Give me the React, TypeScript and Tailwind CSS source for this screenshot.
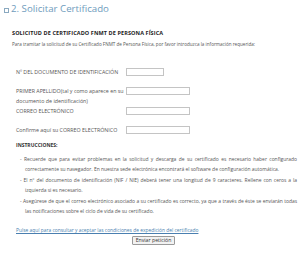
export default function App() {
  const font = { fontFamily: '"Open Sans", "Liberation Sans", sans-serif' };
  return (
    <div className="w-[300px] h-[256px] bg-white overflow-hidden text-[#555]" style={font}>
      {/* Title */}
      <div className="flex items-center gap-[2px] pl-[4px] pt-[3px] h-[15px]">
        <span className="w-[5px] h-[5px] border border-[#8aa9c0] mt-[2px]" />
        <h2 className="text-[9.7px] leading-[12px] text-[#6f9cbd] font-normal">2. Solicitar Certificado</h2>
      </div>

      <div className="pl-[12px] pr-[3px]">
        <h3 className="mt-[13px] text-[5.5px] leading-[10px] font-bold text-[#222] tracking-[0.1px]">
          SOLICITUD DE CERTIFICADO FNMT DE PERSONA FÍSICA
        </h3>
        <p className="mt-[1px] text-[4.6px] leading-[10px]">
          Para tramitar la solicitud de su Certificado FNMT de Persona Física, por favor introduzca la información requerida:
        </p>

        {/* Form rows */}
        <div className="pl-[4px] mt-[18px] flex flex-col text-[5.3px] leading-[10px]">
          <div className="flex items-start">
            <label className="w-[110px]">Nº DEL DOCUMENTO DE IDENTIFICACIÓN</label>
            <input className="mt-[1px] w-[38px] h-[8px] border border-[#c4c4c4] bg-white" />
          </div>
          <div className="flex items-start mt-[9px]">
            <label className="w-[110px]">PRIMER APELLIDO(tal y como aparece en su documento de identificación)</label>
            <input className="mt-[1px] w-[64px] h-[8px] border border-[#c4c4c4] bg-white" />
          </div>
          <div className="flex items-start">
            <label className="w-[110px]">CORREO ELECTRÓNICO</label>
            <input className="mt-[1px] w-[64px] h-[8px] border border-[#c4c4c4] bg-white" />
          </div>
          <div className="flex items-start mt-[9px]">
            <label className="w-[110px]">Confirme aquí su CORREO ELECTRÓNICO</label>
            <input className="mt-[1px] w-[64px] h-[8px] border border-[#c4c4c4] bg-white" />
          </div>
        </div>

        {/* Instructions */}
        <div className="pl-[4px] mt-[5px] text-[4.95px] leading-[10px]">
          <p className="font-bold text-[#333] text-[5px]">INSTRUCCIONES:</p>
          <ul className="mt-[4px] flex flex-col gap-[1px] pl-[4px] text-justify">
            <li className="pl-[5px] -indent-[5px]">
              - Recuerde que para evitar problemas en la solicitud y descarga de su certificado es necesario haber configurado correctamente su navegador. En nuestra sede electrónica encontrará el software de configuración automática.
            </li>
            <li className="pl-[5px] -indent-[5px]">
              - El nº del documento de identificación (NIF / NIE) deberá tener una longitud de 9 caracteres. Rellene con ceros a la izquierda si es necesario.
            </li>
            <li className="pl-[5px] -indent-[5px]">
              - Asegúrese de que el correo electrónico asociado a su certificado es correcto, ya que a través de éste se enviarán todas las notificaciones sobre el ciclo de vida de su certificado.
            </li>
          </ul>
        </div>

        <a href="#" className="block mt-[9px] pl-[4px] text-[4.9px] leading-[10px] text-[#4a7fb0] underline">
          Pulse aquí para consultar y aceptar las condiciones de expedición del certificado
        </a>

        <div className="flex justify-center mt-[1px] pr-[2px]">
          <button className="h-[9px] px-[3px] border border-[#9a9a9a] bg-[#f2f2f2] rounded-[1px] text-[5.2px] leading-[7px] text-[#333]">
            Enviar petición
          </button>
        </div>
      </div>
    </div>
  );
}
